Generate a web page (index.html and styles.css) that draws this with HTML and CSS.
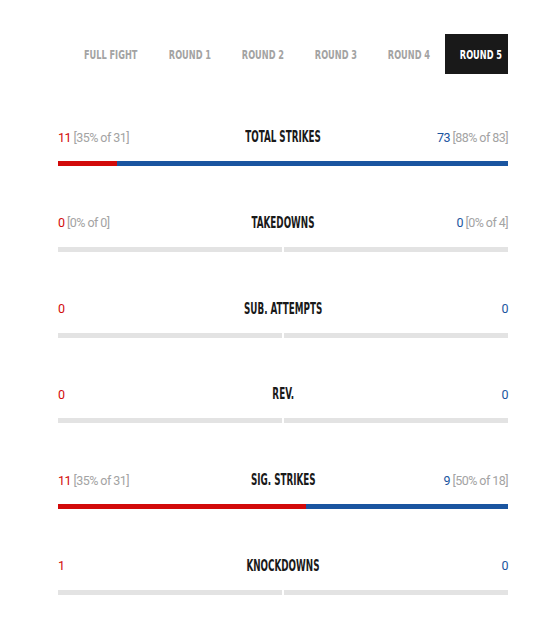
FILE: index.html
```html
<!DOCTYPE html>
<html>
<head>
<meta charset="utf-8">
<link rel="stylesheet" href="styles.css">
</head>
<body>
<div class="wrap">
  <nav class="tabs">
    <span class="tab wide"><span class="tt">FULL FIGHT</span></span>
    <span class="tab"><span class="tt">ROUND 1</span></span>
    <span class="tab"><span class="tt">ROUND 2</span></span>
    <span class="tab"><span class="tt">ROUND 3</span></span>
    <span class="tab"><span class="tt">ROUND 4</span></span>
    <span class="tab active"><span class="tt">ROUND 5</span></span>
  </nav>

  <div class="stat">
    <div class="row">
      <span class="val"><span class="red">11</span> [35% of 31]</span>
      <span class="label">TOTAL STRIKES</span>
      <span class="val right"><span class="blue">73</span> [88% of 83]</span>
    </div>
    <div class="bar"><div class="fill-red" style="width:13.1%"></div><div class="fill-blue"></div></div>
  </div>

  <div class="stat">
    <div class="row">
      <span class="val"><span class="red">0</span> [0% of 0]</span>
      <span class="label">TAKEDOWNS</span>
      <span class="val right"><span class="blue">0</span> [0% of 4]</span>
    </div>
    <div class="bar empty"><div class="half"></div><div class="half"></div></div>
  </div>

  <div class="stat">
    <div class="row">
      <span class="val"><span class="red">0</span></span>
      <span class="label">SUB. ATTEMPTS</span>
      <span class="val right"><span class="blue">0</span></span>
    </div>
    <div class="bar empty"><div class="half"></div><div class="half"></div></div>
  </div>

  <div class="stat">
    <div class="row">
      <span class="val"><span class="red">0</span></span>
      <span class="label">REV.</span>
      <span class="val right"><span class="blue">0</span></span>
    </div>
    <div class="bar empty"><div class="half"></div><div class="half"></div></div>
  </div>

  <div class="stat">
    <div class="row">
      <span class="val"><span class="red">11</span> [35% of 31]</span>
      <span class="label">SIG. STRIKES</span>
      <span class="val right"><span class="blue">9</span> [50% of 18]</span>
    </div>
    <div class="bar"><div class="fill-red" style="width:55%"></div><div class="fill-blue"></div></div>
  </div>

  <div class="stat">
    <div class="row">
      <span class="val"><span class="red">1</span></span>
      <span class="label">KNOCKDOWNS</span>
      <span class="val right"><span class="blue">0</span></span>
    </div>
    <div class="bar empty"><div class="half"></div><div class="half"></div></div>
  </div>
</div>
</body>
</html>
```

FILE: styles.css
```css
html, body {
  margin: 0;
  padding: 0;
  background: #fff;
}
.wrap {
  width: 450px;
  margin-left: 58px;
  padding-top: 34px;
}
.tabs {
  display: flex;
  justify-content: flex-end;
  height: 40px;
}
.tab {
  display: flex;
  align-items: center;
  justify-content: center;
  width: 73px;
  white-space: nowrap;
  font-family: "DejaVu Sans", sans-serif;
  font-stretch: condensed;
  font-weight: 700;
  font-size: 12.5px;
  color: #a3a3a3;
}
.tab.wide { width: 85px; }
.tab.active {
  width: 63px;
  padding-left: 9px;
  box-sizing: border-box;
  background: #191919;
  color: #fff;
}
.tt {
  display: inline-block;
  transform: scaleX(0.73);
}
.tabs + .stat { margin-top: 54px; }
.stat + .stat { margin-top: 47.8px; }
.row {
  display: flex;
  justify-content: space-between;
  align-items: center;
  height: 18px;
}
.val {
  font-family: "Roboto", sans-serif;
  font-size: 12.5px;
  letter-spacing: -0.55px;
  color: #a3a3a3;
  flex: 1;
  white-space: nowrap;
}
.val.right { text-align: right; }
.red { color: #d20a0a; }
.blue { color: #1a55a0; }
.label {
  display: inline-block;
  font-family: "DejaVu Sans", sans-serif;
  font-stretch: condensed;
  font-weight: 700;
  font-size: 15.5px;
  color: #191919;
  white-space: nowrap;
  transform: scaleX(0.63);
  flex: 0 0 auto;
}
.bar {
  display: flex;
  height: 5px;
  margin-top: 15px;
}
.fill-red { background: #d20a0a; }
.fill-blue { background: #1a55a0; flex: 1; }
.bar.empty { gap: 2px; }
.half { flex: 1; background: #e3e3e3; }
```
